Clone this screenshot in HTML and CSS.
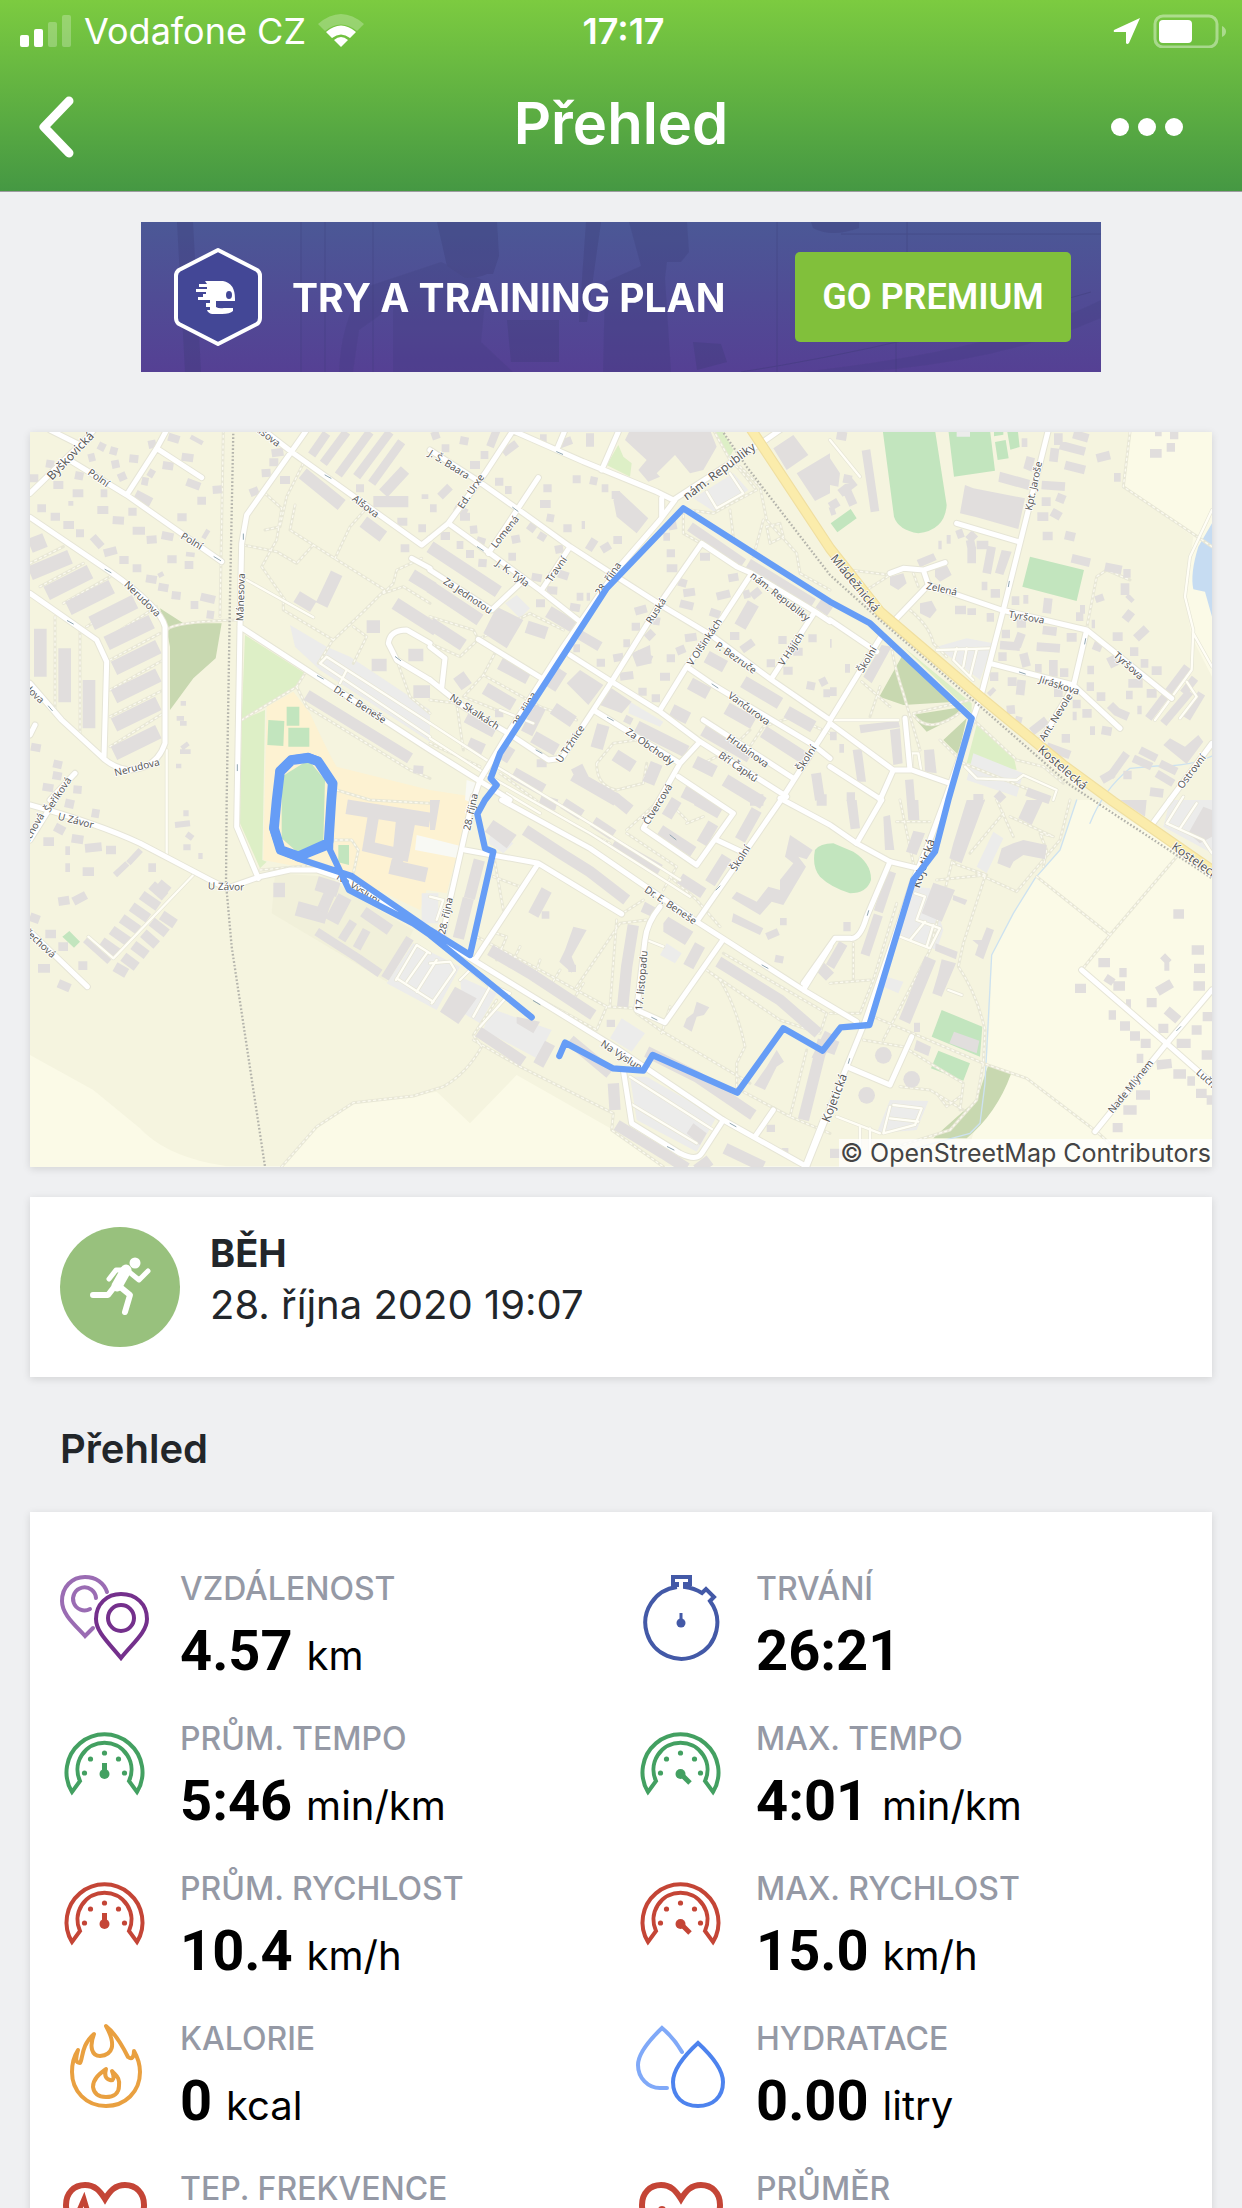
FILE: index.html
```html
<!DOCTYPE html>
<html lang="cs">
<head>
    <meta charset="UTF-8">
    <meta name="viewport" content="width=device-width, initial-scale=1.0">
    <link rel="stylesheet" href="styles.css">
    <title>Přehled</title>
</head>
<body>

<!-- shared icons -->
<svg class="sprite" aria-hidden="true">
    <symbol id="gauge" viewBox="0 0 90 90">
        <path d="M12 70A38 38 0 1 1 77 70L69 59A27 27 0 1 0 20 59Z" fill="none" stroke="currentColor" stroke-width="4"/>
        <g fill="currentColor">
            <circle cx="24.5" cy="51" r="2.6"/><circle cx="30.5" cy="37" r="2.6"/><circle cx="44.5" cy="31" r="2.6"/>
            <circle cx="58.5" cy="37" r="2.6"/><circle cx="64.5" cy="51" r="2.6"/><circle cx="44.5" cy="52" r="5"/>
        </g>
    </symbol>
    <symbol id="heart" viewBox="0 0 90 90">
        <path d="M45 82C20 64 6 50 6 33C6 21 14 13 25 13C35 13 40 19 45 27C50 19 55 13 65 13C76 13 84 21 84 33C84 50 70 64 45 82Z" fill="none" stroke="currentColor" stroke-width="6"/>
    </symbol>
</svg>

<header class="header">
    <div class="status">
        <div class="status-side">
            <svg class="signal" viewBox="0 0 52 34" fill="#fff">
                <rect x="0" y="21" width="9" height="12" rx="2"/>
                <rect x="14" y="15" width="9" height="18" rx="2"/>
                <rect x="28" y="8" width="9" height="25" rx="2" opacity=".25"/>
                <rect x="42" y="1" width="9" height="32" rx="2" opacity=".25"/>
            </svg>
            <span>Vodafone CZ</span>
            <svg class="wifi" viewBox="0 0 46 34" fill="#fff">
                <path d="M0 10Q23 -10 46 10L39 17Q23 4 7 17Z" opacity=".25"/>
                <path d="M8 18Q23 5 38 18L32 24Q23 17 14 24Z"/>
                <path d="M16 26Q23 20 30 26L23 33Z"/>
            </svg>
        </div>
        <span class="clock">17:17</span>
        <div class="status-side right">
            <svg class="location" viewBox="0 0 28 28" fill="#fff"><path d="M27 1L1 13Q0 15 2 15H13V26Q14 28 16 26Z"/></svg>
            <svg class="battery" viewBox="0 0 74 34" fill="#fff">
                <rect x="2" y="2" width="62" height="31" rx="8" fill="none" stroke="#fff" stroke-width="3" opacity=".4"/>
                <rect x="6" y="6" width="33" height="23" rx="4"/>
                <path d="M69 12Q73 14 73 17.500Q73 21 69 23Z" opacity=".4"/>
            </svg>
        </div>
    </div>
    <div class="nav">
        <button class="nav-button" aria-label="Zpět">
            <svg class="back" viewBox="0 0 36 64"><path d="M31 6L6 32L31 58" fill="none" stroke="#fff" stroke-width="9" stroke-linecap="round" stroke-linejoin="round"/></svg>
        </button>
        <h1>Přehled</h1>
        <button class="nav-button" aria-label="Více">
            <svg class="more" viewBox="0 0 72 18" fill="#fff"><circle cx="9" cy="9" r="9"/><circle cx="36" cy="9" r="9"/><circle cx="63" cy="9" r="9"/></svg>
        </button>
    </div>
</header>

<main class="page">
    <section class="banner">
        <svg class="banner-photo" viewBox="0 0 960 150" preserveAspectRatio="none" aria-hidden="true">
            <g fill="#3a3a72" opacity=".28">
                <path d="M36 0H52L60 150H44Z"/>
                <path d="M296 0H356L358 34L352 52H346Q338 56 324 56L306 44Z"/>
                <path d="M300 40L222 66Q200 100 198 150H212L218 108L252 84V150H372L340 120L346 60Z" opacity=".6"/>
                <path d="M488 0H546L548 30L540 40L526 40L524 56L530 150H462L464 60L500 44Z" opacity=".8"/>
                <path d="M670 0H718V6Q690 16 672 6Z"/>
                <path d="M366 98H418V140H370ZM445 0H460L446 100H438ZM552 120L580 122L586 140L556 148Z"/>
                <path d="M660 150Q860 128 960 78V96Q860 140 720 150Z" opacity=".6"/>
            </g>
            <g fill="none" stroke="#3a3a72" opacity=".35">
                <path d="M160 0V150M184 0V150M232 0V150M636 0V150M700 12H960M766 0V50M755 92V150"/>
                <path d="M600 150Q760 125 950 70"/>
            </g>
        </svg>
        <svg class="banner-logo" viewBox="0 0 88 100">
            <path d="M44 3L83 23Q86 25 86 29V71Q86 75 83 77L44 97L5 77Q2 75 2 71V29Q2 25 5 23Z" fill="#434796" stroke="#fff" stroke-width="4" stroke-linejoin="round"/>
            <path d="M31 34H49Q61 36 61 52V54H42V60Q45 62 50 61H59V64Q56 67 48 67H38Q34 66 33 63H36V60H32V56H36V53H24V50H29V47H32V45H22V42H33V40H25V37H33Z" fill="#fff"/>
            <ellipse cx="55" cy="48" rx="3" ry="4" fill="#434796"/>
        </svg>
        <span class="banner-text">TRY A TRAINING PLAN</span>
        <button class="premium">GO PREMIUM</button>
    </section>

    <section class="card map">
        <svg class="map-canvas" viewBox="0 6 3546 2204" role="img" aria-label="Mapa trasy">
            <defs>
                <g id="roads">
                    <path d="M0 190L165 30L200 -10M60 0L150 45M110 85L290 195L575 395M290 195L380 55L410 0M380 55L515 143M0 262L240 425Q390 530 405 590V940Q380 1015 300 1020Q250 1015 215 980L95 870L0 760M0 490L200 630L230 695L222 980M830 0L650 255L635 340L630 590L620 1190L685 1345M700 0L790 70L1175 345L1200 325M630 590L1200 960L1440 1110M1145 385L1200 415M1200 640L1130 600Q1080 600 1075 640L1100 690L1200 750M0 915L15 885M60 1110L135 1030"/>
                    <path transform="translate(0 1110)" d="M0 15Q200 70 330 130L540 240L590 265L690 230L780 210L860 210L950 240L1150 370L1330 480L1760 745L2080 960L2330 1100M0 120L100 -40M0 395L172 560"/>
                    <path transform="translate(1200 0)" d="M0 60L140 150L260 235L420 350L575 450L700 530L850 620L1025 750L1200 870M255 5L460 95L680 185L730 210M380 60L405 0M515 120L565 5M250 0L165 130L55 280L0 325M55 280L180 370L330 480L450 575M325 143L175 370M420 350L335 480M730 210L1000 35L1050 0M695 205V260M735 210L690 270L560 420L400 650L240 900L150 1050L130 1110M815 340L690 520L545 755L490 840L395 985L355 990L235 910M815 340L920 410L965 430L1155 545L1200 575M965 430L880 560L770 710L690 840M770 710L850 765L1150 945L1200 985M420 675L545 755L690 845L810 935L1070 1100M490 840L750 1000L810 935M1155 545L1025 745M820 870L1090 1045M1200 880L1060 1100M750 1000L640 1195L800 1305L910 1150L745 1040M145 628L335 745M0 650L45 685L35 775M0 750L100 830L235 910M0 420L185 540L270 460"/>
                    <path transform="translate(1200 1110)" d="M130 -10L60 300L40 400M105 150L325 190L575 342M325 190L135 480M215 0L480 145L800 365L1120 570L1280 665M690 320Q650 370 645 420L620 630L705 668L875 425M800 365L1060 -10M860 120L945 160M1050 -5L1200 75L1280 130L1380 185L1465 205M1120 570L1200 440M580 810L605 970L750 1060Q800 1085 815 1060L880 960M975 1010L1030 930M1125 1100L1180 960"/>
                    <path transform="translate(2400 0)" d="M655 0L520 540L455 790L345 1110M380 280L565 335M180 430L220 415L280 420L345 398M280 420L295 465L195 570M295 465L515 540L770 600L1025 805M770 600L730 770L625 945M480 700L730 765L870 895M150 625L0 870M0 880L190 1020L245 1020L360 1060M225 865L240 1020M190 1020L150 1110M0 570L140 665M0 1010L155 1110M1020 1110L1146 940"/>
                    <path transform="translate(2400 1110)" d="M345 0L300 120L250 240L190 420L105 665L50 800L-70 1100M80 130L155 0M180 185L110 350Q90 420 60 415L15 415L-80 550M50 800L180 855L245 710M755 510L1010 730L1146 850M795 995L1010 730L1146 570M965 75L1020 0"/>
                </g>
                <g id="lanes">
                    <path d="M650 450L850 562M870 700L890 680L1200 880M870 700L1200 920M950 720L930 760M410 960V1280M490 1335L250 1585L175 1520M1098 1650L1160 1545L1200 1570M1100 1645L1210 1715M1130 1655L1190 1570M1160 1685L1220 1590"/>
                    <path transform="translate(1200 0)" d="M830 185L860 235L940 190L900 130M210 840L310 880M0 880L200 1010L480 1180L750 1350M0 925L180 1040L480 1210L780 1400M230 1090L330 1150M90 1650L120 1620L180 1670L130 1760M185 1665L240 1690L150 1790M0 1600L60 1595L75 1620L5 1720M600 1940L850 2100M600 2020L800 2140M650 1530L700 1550M0 1400L40 1410L20 1470"/>
                    <path transform="translate(2400 0)" d="M0 870H205M320 660L480 655M380 655L370 690M410 655L400 710M440 660L420 740M370 690L430 750M1146 240L1080 380L1065 500L1090 600L1085 720L975 870M1090 610L1146 710M1070 755L1100 800L1050 865M405 1010L440 1045L560 1050L580 1035L680 1080L670 1110M0 30L90 140M245 975V1020M245 970L265 970L275 1030"/>
                    <path transform="translate(2400 1110)" d="M1010 70L1060 -10M1050 85L1100 10M1010 70L1120 120L1146 160M255 280L285 290L260 360L330 385L300 445L210 410M285 365L240 420M310 375L290 440M190 915L275 925L255 975L160 1000L180 920M180 955L265 965M20 950L150 1000M90 980V1050M120 985V1050M355 570L395 585"/>
                </g>
                <g id="paths">
                    <path d="M580 0L570 560M410 600Q430 575 620 570M705 190L755 235L740 330L695 410L765 510M820 100L770 200L750 290L705 300M795 225L780 300L850 345L1065 480L1000 545L905 635L865 700M640 345L740 365L800 400L850 345M1000 245L960 290L915 385M1175 385L1100 420L1090 460L1060 490M635 870L800 770L825 730M760 515V540L910 630M75 560V850M150 600V920M800 770L830 830L1140 1020L1200 1045M0 400L100 350M30 470L160 400M100 520L240 440M170 590L310 500M240 620L380 530M240 690L390 610M240 780L400 690M240 860L400 780M240 950L400 850M1100 690L1140 800L1200 850M920 1080L1020 1110L1200 1120M690 1320L860 1305M915 1230H965L985 1260L970 1330M1060 490L1120 470L1200 520M970 590L1010 620L970 700"/>
                    <path transform="translate(0 1110)" d="M755 1100L860 980L970 908L1150 888L1240 860Q1310 820 1355 740L1330 705L1400 600M1330 720L1470 800L1750 940L1745 990L1900 1100"/>
                    <path transform="translate(1200 0)" d="M850 0L900 90L930 120L980 180L850 250L780 240M760 240V310L830 350M900 240L910 320M1000 270L970 380M930 110L990 170L1010 270L1100 370L1110 430L1200 480M1010 290L1050 280L1060 320L1020 340ZM200 840L100 800L160 735L200 660M145 628L90 680L0 640M0 560L130 600L145 628L300 550L400 600M0 810L80 820L100 960M160 735L330 830L440 870M500 1000L550 940L620 930M500 1000Q500 1070 560 1080L640 1060L650 1000M210 1030L330 1120L440 1190L620 1290M590 1200L700 1100M820 1000L900 960L960 900M0 940L150 1010M1200 910L1090 860L1000 890L940 980"/>
                    <path transform="translate(1200 1110)" d="M190 160L220 330M190 230L270 260M140 410L330 510L530 620L610 625M570 345L640 300M560 360L540 620M440 560L570 370L650 360M200 400L230 410L200 480M270 440L240 500M330 480L310 540M390 510L360 560M460 550L430 600M720 230L800 300L870 380M830 510L870 540Q920 620 945 740L920 790V860M830 510L1050 660L1170 700L1190 640L880 460M620 640L690 690L960 850M530 620L500 690L280 570M695 700L720 620M930 870L1080 950L1200 1000M1080 950L1130 750M590 100L740 200L700 270M770 60L740 30M770 70L820 50M540 130L460 90"/>
                    <path transform="translate(2400 0)" d="M60 420L180 435L110 480M240 540Q300 590 310 640L350 680M250 430L265 470M900 6L880 170L1146 350M770 595L800 440L830 420L900 450M185 650Q190 700 220 790L270 960M95 755L180 830M250 850L420 810M250 855Q300 920 400 840M420 860L560 990L640 1010L700 1060M330 930L400 1000L600 1080M150 770L120 860M210 1110L250 1300M200 1175H300M720 1110L690 1230L560 1385L440 1330"/>
                    <path transform="translate(2400 1110)" d="M460 0L370 190L470 225L320 240M370 170L300 450L160 720M465 230L400 430L385 500Q440 580 465 690L460 790L440 900L360 990L200 1040M130 650L460 790L590 835L800 995L850 1040M620 230L840 405L755 510M840 405L1040 170M500 0L550 110M520 40L420 160M540 50L670 110L630 100L650 150L640 200M0 550L120 540M70 430V540M200 310L130 540L90 640H0M100 720L220 740L300 790L400 850L390 930M210 860L300 870L400 930M320 880L350 920L390 890"/>
                </g>
            </defs>

            <rect class="land" x="0" y="0" width="3546" height="2210"/>

            <!-- fields -->
            <g class="field">
                <path d="M0 1875L190 1980L330 2095Q400 2170 540 2200L600 2210H0Z"/>
                <path d="M755 2210L860 2090L970 2018L1150 1998L1220 1985L1320 2080L1460 1935L1750 2100L1900 2210Z"/>
                <path d="M3300 0L3280 170L3490 320L3465 500L3485 620L3546 740V0Z"/>
                <path d="M3140 1110L3090 1260L3015 1345L2950 1450L2885 1575L2880 1750L2865 1960L2830 2110L2800 2210H3546V1325L3200 1110Z"/>
            </g>
            <path class="yard" d="M735 1330L900 1340L960 1390L1150 1500L1070 1655L725 1450Z"/>
            <path class="school" d="M710 830L790 785L840 850Q900 980 920 1010L1200 1080L1330 1100L1290 1240L1250 1390L1190 1380L1170 1440L960 1340L700 1290Z"/>
            <g class="grass">
                <path d="M645 615L825 730L795 775L635 870ZM635 870L705 840L697 1290L710 1295L690 1315L630 1180Z"/>
                <path d="M1730 105L1765 45L1780 80L1805 100L1800 140ZM2050 6L2080 6L2110 60L2100 80Z"/>
                <path d="M2620 650L2825 820V850ZM2840 885L2950 975L2960 1020L2810 1000Z"/>
            </g>
            <g class="wood">
                <path d="M390 535L460 580L575 580L557 685L490 745L420 840V650L410 600Z"/>
                <path d="M2615 680L2548 800L2620 825L2780 815ZM2645 855L2800 830L2760 870L2690 905ZM2740 930L2810 865L2785 975Z"/>
                <path d="M2875 1905L2943 1932Q2900 2050 2810 2125L2710 2125Q2780 2060 2840 2010Z"/>
            </g>
            <g class="pitch">
                <path d="M770 830h38v57h-38ZM715 870l48 3-3 75-48-3ZM775 893h63v57h-63ZM925 1245h32v60l-32-8ZM118 1503L150 1535L132 1553L97 1520Z"/>
                <path d="M755 1040L835 990L885 1050L880 1235L808 1272L755 1225Z"/>
                <path d="M2558 0H2715L2750 225Q2745 300 2665 310Q2605 300 2592 260ZM2755 0H2880L2895 122L2772 140ZM2895 36l32-6 9 55-33 5ZM2932 6h32l5 45-28 8ZM2892 0h28v14l-28 5ZM3000 380L3162 420L3140 513L2977 470ZM2402 280L2462 237L2480 265L2422 307Z"/>
                <path d="M2355 1260Q2370 1240 2410 1240L2470 1265Q2525 1300 2523 1350Q2510 1390 2460 1390Q2400 1370 2370 1340Q2345 1310 2355 1260ZM2735 1740L2857 1790L2850 1880L2705 1820ZM2725 1862L2820 1900L2800 1952L2703 1915Z"/>
            </g>
            <path class="water" d="M3546 280L3505 350Q3480 430 3490 478L3525 485L3546 560Z"/>
            <path class="stream" d="M3546 978Q3480 1010 3380 1008L3300 1015Q3220 1080 3180 1180M3140 1110L3090 1260L3015 1345L2950 1450L2885 1575L2865 1960L2850 2080L2820 2110L2600 2170"/>
            <g class="parking">
                <path d="M780 585L890 650L960 680L1200 840V935L870 720L795 650ZM1070 1660L1150 1540L1290 1610L1220 1740ZM1175 1390h50v90h-50Z"/>
                <path d="M1425 520L1460 495L1500 535L1470 565ZM1800 815L1900 875L1890 890L1795 850ZM1990 205L2110 130L2155 180L2060 250ZM2780 0h40v20h-40Z"/>
                <path d="M1380 1735L1565 1800L1520 1885L1360 1800ZM1775 1765L1845 1810L1805 1865L1740 1825ZM1800 1940L1850 1940L2060 2060L2000 2165L1820 2070ZM1290 1640L1400 1690L1350 1780L1300 1750ZM1910 1540L1955 1570L1935 1600L1890 1575ZM1385 1200L1450 1240L1420 1270L1375 1240Z"/>
                <path d="M2720 650L2810 625L2890 640L2850 750ZM2830 970L2980 1030L2960 1100L2810 1050ZM2890 1205L2920 1225L2870 1330L2840 1310ZM2580 2010L2695 2013L2660 2100L2540 2110ZM3420 1110H3546V1270L3400 1190ZM2650 1370L2700 1375L2740 1500L2720 1560L2610 1520ZM2570 1640L2620 1655L2605 1690L2560 1670Z"/>
            </g>
            <path class="plaza" d="M1160 1215L1200 1225L1300 1250L1285 1285L1155 1260ZM1310 1050L1340 1060L1330 1120L1305 1110Z"/>

            <use href="#paths" class="path-case"/>
            <use href="#paths" class="path-line"/>

            <!-- buildings: wide strokes for the rows, short ones for the houses -->
            <g class="building">
                <path stroke-width="44" d="M0 348L45 330M0 430L120 380M50 490L180 425M115 535L245 470M185 580L315 515M230 640L365 575M252 715L385 650M252 800L385 735M252 885L385 820M252 970L385 905"/>
                <path stroke-width="38" d="M31 596V740M104 655V817M177 750V895M818 130L935 225M1000 275L1060 320M800 500L850 530M920 430L875 525M1145 435L1210 475M1095 520L1220 600M1010 590L1050 590M1025 705L1070 705M1135 675L1180 675M1150 785L1200 785"/>
                <path stroke-width="34" d="M830 795L1140 985M315 195L362 220M1060 190L1125 120M1030 215L1135 215"/>
                <path stroke-width="26" d="M845 75L890 10M880 100L950 6M925 135L1020 6M980 140L1080 6M1025 160L1115 35"/>
                <path stroke-width="24" d="M205 45L225 55M240 60L262 66M175 85L195 80M245 105L268 100M298 85L325 88M265 145L288 135M135 135L160 140M128 190L160 190M212 190L232 190M22 235L48 235M62 260L90 260M100 285L132 285M138 310L162 310M188 320L215 350M222 370L260 360M268 390L296 390M308 415L334 415M348 445L380 450M385 470L415 475M425 495L452 498M482 525L505 525M512 500L555 510M530 553L552 556M412 388L440 388M464 405L490 405M350 330L380 328M308 302L345 302M395 315L430 322M248 270L282 272M202 240L235 240M295 245L320 245M502 212L528 212M548 180L575 178M455 80L490 85M398 105L430 110M470 155L510 170M442 262L470 262M355 125L372 135M335 152L355 156M355 45L378 40M415 20L448 30M725 70L760 65M718 97L745 97M750 150L780 150M695 130L722 128M660 190L685 180M70 165L100 165M0 145L25 145M48 100L72 104M3 950L32 955M70 1000L96 1006M68 1035L95 1040M38 1070L70 1075M130 1078L155 1080M1150 1018L1180 1020M1112 355L1138 355M1102 275L1132 275M978 175L1002 175M1165 295L1188 295"/>
                <path stroke-width="14" d="M482 20L518 40M520 325L535 300M468 372L494 375M385 438L400 430M440 865H462M450 880H470M452 820H468M450 965H482M455 955L475 940M438 1008H454M115 220H130M1175 200H1195"/>
            </g>
            <g class="building" transform="translate(0 1110)">
                <path stroke-width="26" d="M105 8L132 14M185 38L208 42M40 125L72 125M75 80L103 95M125 115L160 120M165 145L215 140M228 150L258 150M158 215L192 215M85 305L118 300M130 305L168 285M0 350L28 360M46 402L78 402M85 440L114 440M24 505L60 505M145 497L172 497M85 550L120 565M355 203L378 203M106 152H120M106 203H120"/>
                <path stroke-width="30" d="M335 285L385 320M305 320L355 355M275 355L325 390M245 390L295 425M215 425L265 460M255 500L290 520M280 470L320 500M310 435L350 465M340 400L380 435M365 365L410 400M395 345L435 372M365 255L405 290M385 250L415 275"/>
                <path stroke-width="18" d="M165 420L238 485M255 225L292 190M295 190L332 150M435 75L480 70M460 40H476M470 102L488 115M460 142H482M505 168H518"/>
                <path stroke-width="44" d="M800 325L890 350M860 250L925 270M945 290L905 365M950 20L1200 60M730 270L765 270M1080 200L1190 225"/>
                <path stroke-width="34" d="M1000 335L1080 390M905 265L875 335M1030 50L1015 140L1120 165L1140 60M1115 60L1100 210"/>
                <path stroke-width="26" d="M970 365L935 420M1010 390L980 445M860 395L985 475M985 475L1050 520M1140 415L1065 535"/>
            </g>
            <g class="building" transform="translate(1200 0)">
                <path class="solid" d="M585 30L600 0H840L860 50L820 120L780 130L735 75L680 130L690 140L655 155L625 120L650 90ZM1030 55L1090 15L1135 75L1070 120ZM1100 130L1200 70V190L1155 213ZM550 210L570 185L655 265L620 310L560 260ZM200 530L280 570L230 655L160 610ZM410 760L450 720L520 765L475 825ZM525 790L545 775L605 815L575 850L510 825ZM605 670L660 645L665 700L620 710Z"/>
                <path stroke-width="38" d="M0 350L205 485M0 470L150 570M0 580L100 645M210 700L295 745M165 775L250 825M85 735L110 770M290 590L350 610M110 860L195 905M115 940L160 960M355 545L430 590M330 830L290 910M395 720L360 775M240 950L215 990M370 835L430 875M310 920L380 960M430 1035L560 1110M520 885L500 955M555 975L610 1010M620 890L770 965M680 1000L655 1060M725 840L775 865M780 760L835 790M830 680L885 710M890 835L970 880M820 900L960 980M1000 905L1140 995M940 755L1050 820M1070 845L1150 890M795 995L855 1025M885 1050L1000 1120M760 1085L830 1120M970 520L930 590M250 1030L340 1080M440 1010L460 1050"/>
                <path stroke-width="30" d="M780 290L940 400M955 400L1150 520M1165 520L1200 545M450 615L510 650M1158 1030L1170 1110"/>
                <path stroke-width="24" d="M5 20L28 12M35 55H58M90 30L115 35M180 50L200 0M220 70L260 40M120 105H150M152 75H175M195 155H220M225 180H245M30 200L60 170M75 230L110 250M90 260H120M120 300L142 298M140 330L165 338M32 318H60M80 345H100M108 372H132M145 398L170 400M245 330L270 325M295 285L315 300M330 330L342 310M350 262L372 266M330 222H362M340 175H365M428 148H452M480 150L502 155M515 175H535M545 195H570M375 360L400 355M400 295H425M455 285H465M475 360L495 328M515 360L540 345M550 330H576M235 380H258M350 480L382 482M385 430L415 440M305 440L335 445M420 530L450 535M318 520H345M385 45L425 30M480 50V10M700 320H720M715 290L740 285M710 370H735M710 415H742M810 380H840M745 455L770 462M760 490L795 485M750 520L790 530M860 500L900 490M840 545L870 555M895 445L925 440M940 495L960 490M965 500L990 480M615 545L650 535M660 570L690 575M605 590H630M650 625L670 605M580 640H600M550 685L580 680M500 698H525M570 740L610 735M620 670L665 690M690 740H720M710 685H735M740 665L765 655M765 625L800 620M900 618H928M935 660L970 635M1045 630H1070M1090 665H1118M1010 700H1035M1060 722H1088M1135 625H1160M1130 765L1155 770M1170 760L1190 750M1180 790H1200M625 785H650M665 805H690M195 850H220M320 1000H350M590 880L600 860M470 500H480M440 500H460M430 655H450M330 25H350M0 235H20"/>
            </g>
            <g class="building" transform="translate(1200 1110)">
                <path class="solid" d="M165 95L190 60L260 105L230 145ZM30 635L75 560L140 595L85 672ZM0 0H30L15 90H0ZM700 370L715 350L790 395L765 435L700 395ZM645 305L680 325L665 350L632 335ZM1080 105L1148 150L1130 178L1105 170L1128 200L1060 315L1025 305L990 345L905 295L920 275L980 305L1015 260L1050 270L1050 240L1090 190L1065 170ZM910 340L1000 385L990 405L905 365ZM260 650L330 665L310 700L260 670ZM430 380L470 390L425 470L435 495L425 518L388 485L405 450ZM800 605L838 622L822 645L800 650L785 695L760 680L770 655L790 640ZM1040 750L1062 785L1040 800L1005 870L972 855L1010 800ZM770 1000L790 970L830 1000L810 1035Z"/>
                <path stroke-width="34" d="M285 90L400 165L480 215L590 300M148 180L118 295M115 295L85 415M350 270L310 345M610 375L590 500L578 620M180 450L300 520L490 645M810 435L775 500M865 485L1050 600L1165 700M420 720L540 820M650 755L800 830L970 945M550 850L555 930M560 975L700 1060L770 1105M885 1045L1000 1100M145 695L280 785M360 730L325 795M550 130L690 210M490 65L550 105M400 10L455 45M330 0L380 15M690 90L790 155M740 0L710 50M850 70L815 130M750 235L820 280M890 170L840 250M800 0L870 40M980 30L930 120M550 -10L600 30M840 1080L800 1110M960 0H1000M1160 0H1190M1160 780L1200 700M1180 720L1120 960M1170 500L1200 530"/>
                <path stroke-width="22" d="M335 345H358M530 670H555M1050 365H1070M1010 410L1045 395M1035 475L1060 480M1010 985H1035M1055 1055H1075M415 505H438M0 400H20"/>
            </g>
            <g class="building" transform="translate(2400 0)">
                <path class="solid" d="M405 165L430 175L585 205L565 297L440 262L390 250ZM0 85L30 130L25 170L0 165ZM1000 945L1020 925L1065 950L1105 915L1120 935L1070 1002ZM510 125L600 150L595 180L505 155ZM590 78L615 85L605 125L580 115ZM515 360L545 365L520 435L495 428ZM260 390L310 370L320 390L270 412ZM315 415L350 405L365 435L330 455L315 440ZM180 440L220 430L230 460L205 480L180 465ZM270 520L305 512L320 540L300 565L270 550ZM88 885L205 872L210 892L92 910ZM180 900L210 895L218 1000L190 1005ZM68 960L95 957L108 1055L82 1055ZM282 960L312 958L320 1030L285 1025ZM225 1050L250 1048L255 1110H230ZM100 740L155 645L185 650L125 760Z"/>
                <path stroke-width="26" d="M108 60L135 245M20 15L50 20M40 145L65 150M30 190L75 155M50 180L70 225M0 230L25 215M0 245L15 240M685 10V45M675 55L670 95M690 45L765 65M730 12L775 25M705 105L765 120M635 165L705 170M635 215L662 215M622 260L655 260M638 318L668 318M705 315L735 322M725 385L780 398M825 410L875 420M880 430H902M800 85L840 75M852 142H872M680 200L705 210M665 245L692 260M410 345L435 340M415 330L435 310M440 345L475 345M425 350V400M485 350L470 430M455 468H472M482 490H510M545 512H568M580 508H595M655 505L650 550M470 562H492M375 540L408 540M425 535V555M738 560H760M750 538H765M515 612H540M560 650L575 610M510 645L570 650M560 580H588M638 600L680 605M620 650L690 655M710 622H740M505 680H530M580 670L590 710M615 715H635M690 728H715M670 690V740M480 740H505M533 755L560 755M575 750L570 795M530 840L555 838M555 870L575 875M480 780L490 790M672 788H698M728 822H752M728 858H740M757 850H785M770 770H792M772 720H792M790 645L815 655M848 620H878M918 625L950 595M885 570L905 545M885 460L885 495M895 510L905 500M805 495L812 515M785 582H795M900 665H925M895 760H938M932 700H955M965 722H995M950 790H980M888 795H908M800 800H826M840 825L860 845L895 860M780 902H795M815 900L845 905M922 840H935M695 925H720M605 905L650 870M840 680L855 710M650 950L720 975M960 70H995M1010 52H1035M975 6H995M1020 15H1045M575 38H592M325 345H335M350 328H362M380 315L400 308M0 785H20M45 715H60M0 918H20M28 955H42M0 640H5M50 1100H75M500 1090L520 1110M590 1085L660 1110M430 1105H460M880 1035H905M815 1050L850 1030M960 1085L1000 1090"/>
                <path stroke-width="24" d="M1072 710L955 865M1080 785L1000 880M1115 790L1070 865M1095 745L1060 790M930 960L980 985M910 985L965 1010M990 1000L1040 1025M980 1030L1030 1060M890 970L840 1040"/>
            </g>
            <g class="building" transform="translate(2400 1110)">
                <path class="solid" d="M410 0H465L395 190L358 175L370 130ZM590 0H640L605 75L565 55ZM515 145L550 130L580 120L650 135L645 178L580 165L550 185L540 205L502 190ZM310 248L375 270L335 365L275 340ZM470 382L492 390L460 478L435 465L445 435L427 420L455 420ZM285 468L318 482L240 672L207 657ZM335 478L378 490L335 590L307 580L325 520ZM372 695L448 722L440 760L358 730ZM317 430L383 455L378 478L315 452ZM1075 100L1120 20L1146 30V110L1110 130ZM370 285L412 300L405 315L368 300ZM160 50L180 45L193 150L165 150ZM50 0H80L90 85L62 88ZM230 0H265L268 60H235ZM250 92L285 100L260 165L228 155ZM260 720L303 740L295 768L252 750ZM870 0H950L945 50Z"/>
                <path stroke-width="28" d="M185 215L145 335M145 345L105 465M40 430L0 500M40 380H62M1030 342H1062M1085 450H1122M1092 505H1125M1090 558H1125M735 565H768M805 488H840M868 518H890M850 558H885M982 575L1025 550M950 608H980M1010 630L1045 660M985 685H1015M1085 690H1115M1040 730H1082M1118 650H1146M1115 765H1146M1030 822H1068M1072 843H1095M1098 880H1130M980 795L1025 790M918 885H960M880 930H920M848 983H878M900 708H930M870 678H900M932 730H962M836 645H858M920 775H940M888 612H903M1003 498H1018M1000 485L1015 470M832 550L845 530M1130 900H1146M252 682H270M0 760L15 720M0 1060H50"/>
                <circle cx="160" cy="766" r="25"/><circle cx="245" cy="838" r="25"/><circle cx="110" cy="886" r="25"/>
            </g>

            <use href="#lanes" class="lane-case"/>
            <use href="#lanes" class="lane-line"/>
            <use href="#roads" class="road-case"/>
            <use href="#roads" class="road-line"/>
            <path class="main-case" d="M2165 0L2400 355L2550 545L2850 800L3100 1005L3250 1115L3546 1320"/>
            <path class="main-line" d="M2165 0L2400 355L2550 545L2850 800L3100 1005L3250 1115L3546 1320"/>
            <path class="rail" d="M610 0L600 500L590 1110L588 1360L605 1550L705 2210M2075 0L2150 110L2400 435L2550 570L2840 820L3120 1065L3546 1345"/>
            <path class="arrows" d="M885 135l18 10M225 418l18 10M552 380l20 12M112 572l18 10M55 828l12 14M640 328v-16M862 737l18 10M1096 680l16 12M622 1022v-18M1448 232l16 12M1342 350l18 12M1580 65l18 8M2046 762l18 12M1732 862l18 10M1518 960l18 10M1920 1215l18 14M2058 1380l12-12M2196 1605l18 10M1510 1712l20 12M1865 1762l16 8M2100 2080l18 10M1912 2150l20 10M2935 470l3-16M2968 726l18 6M3164 642l3-16M3440 1802l12-12M2512 1456l4-14M2455 1900l4-14"/>

            <g class="labels">
                <g>
                    <text transform="translate(130 86) rotate(-46)" class="big">Byškovická</text>
                    <text transform="translate(200 152) rotate(35)">Polní</text>
                    <text transform="translate(480 342) rotate(31)">Polní</text>
                    <text transform="translate(330 514) rotate(44)">Nerudova</text>
                    <text transform="translate(323 1022) rotate(-14)">Nerudova</text>
                    <text transform="translate(642 502) rotate(-88)">Mánesova</text>
                    <text transform="translate(1001 237) rotate(37)">Alšova</text>
                    <text transform="translate(705 24) rotate(37)">Alšova</text>
                    <text transform="translate(984 832) rotate(33)">Dr. E. Beneše</text>
                    <text transform="translate(135 1182) rotate(14)">U Závor</text>
                    <text transform="translate(588 1380) rotate(2)">U Závor</text>
                    <text transform="translate(92 1100) rotate(-56)">Šeříková</text>
                    <text transform="translate(-20 775) rotate(43)">Nerudova</text>
                    <text transform="translate(10 1215) rotate(-60)">Ořechová</text>
                    <text transform="translate(16 1540) rotate(43)">Ořechová</text>
                    <text transform="translate(980 1385) rotate(32)">Na Výsluní</text>
                </g>
                <g transform="translate(1200 0)">
                    <text transform="translate(52 112) rotate(32)">J. Š. Baara</text>
                    <text transform="translate(131 190) rotate(-56)">Ed. Urxe</text>
                    <text transform="translate(233 312) rotate(-51)">Lomená</text>
                    <text transform="translate(388 424) rotate(-55)">Travní</text>
                    <text transform="translate(242 438) rotate(36)">J. K. Týla</text>
                    <text transform="translate(108 506) rotate(34)">Za Jednotou</text>
                    <text transform="translate(543 452) rotate(-55)">28. října</text>
                    <text transform="translate(687 548) rotate(-57)">Ruská</text>
                    <text transform="translate(832 642) rotate(-56)">V Olšinkách</text>
                    <text transform="translate(912 692) rotate(35)">P. Bezruče</text>
                    <text transform="translate(875 134) rotate(-37)" class="big">nám. Republiky</text>
                    <text transform="translate(1044 508) rotate(38)">nám. Republiky</text>
                    <text transform="translate(1092 663) rotate(-56)">V Hájích</text>
                    <text transform="translate(951 844) rotate(36)">Vančurova</text>
                    <text transform="translate(947 971) rotate(36)">Hrubínova</text>
                    <text transform="translate(919 1019) rotate(35)">Bří Čapků</text>
                    <text transform="translate(1138 990) rotate(-58)">Školní</text>
                    <text transform="translate(654 958) rotate(35)">Za Obchody</text>
                    <text transform="translate(429 948) rotate(-56)">U Tržnice</text>
                    <text transform="translate(128 854) rotate(33)">Na Skalkách</text>
                    <text transform="translate(293 843) rotate(-60)">28. října</text>
                </g>
                <g transform="translate(2400 0)">
                    <text transform="translate(621 170) rotate(-78)">Kpt. Jaroše</text>
                    <text transform="translate(333 487) rotate(12)">Zelená</text>
                    <text transform="translate(588 572) rotate(10)">Tyršova</text>
                    <text transform="translate(889 715) rotate(42)">Tyršova</text>
                    <text transform="translate(685 776) rotate(18)">Jiráskova</text>
                    <text transform="translate(686 867) rotate(-58)">Ant. Nevole</text>
                    <text transform="translate(66 467) rotate(51)" class="big">Mládežnická</text>
                    <text transform="translate(690 1022) rotate(41)" class="big">Kostelecká</text>
                    <text transform="translate(1093 1031) rotate(-53)">Ostrovní</text>
                    <text transform="translate(120 694) rotate(-60)">Školní</text>
                </g>
                <g transform="translate(1200 1110)">
                    <text transform="translate(716 324) rotate(34)">Dr. E. Beneše</text>
                    <text transform="translate(940 180) rotate(-58)">Školní</text>
                    <text transform="translate(645 543) rotate(-85)">17. listopadu</text>
                    <text transform="translate(572 777) rotate(33)">Na Výsluní</text>
                    <text transform="translate(57 350) rotate(-78)">28. října</text>
                    <text transform="translate(132 38) rotate(-78)">28. října</text>
                    <text transform="translate(692 18) rotate(-58)">Čtvercová</text>
                </g>
                <g transform="translate(2400 1110)">
                    <text transform="translate(1096 197) rotate(35)" class="big">Kostelecká</text>
                    <text transform="translate(910 866) rotate(-51)">Nade Mlýnem</text>
                    <text transform="translate(1124 845) rotate(43)">Luční</text>
                    <text transform="translate(25 898) rotate(-69)" class="big">Kojetická</text>
                    <text transform="translate(292 194) rotate(-72)" class="big">Kojetická</text>
                </g>
            </g>

            <path class="route" d="M1505 1762L1200 1515L1150 1480L957 1380L900 1260L903 1110L907 1055L865 990L835 978L782 985L746 1020L742 1110L727 1195L750 1262L805 1285L893 1250M800 1284L935 1328L965 1338L1200 1500L1320 1575L1390 1265L1365 1255L1342 1152L1365 1110L1400 1065L1382 1045L1410 970L1730 475L1960 235L2400 515L2520 580L2825 865L2755 1110L2715 1265L2650 1350L2518 1785L2432 1792L2378 1862L2260 1795L2122 1988L1868 1875L1840 1922L1748 1915L1605 1838L1588 1878"/>
            <path class="route lap" d="M896 1235L904 1110L908 1060L864 994L835 984L785 991L750 1025L740 1110L732 1195L752 1260L805 1279L885 1243"/>
        </svg>
        <span class="attribution">© OpenStreetMap Contributors</span>
    </section>

    <section class="card activity">
        <svg class="sport" viewBox="0 0 120 120">
            <circle cx="60" cy="60" r="60" fill="#98c17d"/>
            <g fill="none" stroke="#fff" stroke-linecap="round" stroke-linejoin="round">
                <path d="M66 43L57 59" stroke-width="11"/>
                <path d="M68 43H56L49 52M68 44L79 53L88 44" stroke-width="5"/>
                <path d="M55 59L48 68H33M59 59L70 68L65 85" stroke-width="6"/>
            </g>
            <circle cx="75" cy="36" r="5.500" fill="#fff"/>
        </svg>
        <div>
            <h2 class="activity-name">BĚH</h2>
            <p class="activity-date">28. října 2020 19:07</p>
        </div>
    </section>

    <h2 class="section-title">Přehled</h2>

    <section class="card stats">
        <div class="stat">
            <svg class="icon" viewBox="0 0 90 90" fill="none" stroke-width="4">
                <g stroke="#9a6cb3" stroke-linecap="round">
                    <path d="M47 20C44 11 36 5 25 5C12 5 2 15 2 29C2 42 14 52 25 64L33 56"/>
                    <path d="M36 26A11.500 11.500 0 1 0 30 37"/>
                </g>
                <g stroke="#74308c">
                    <path d="M61 86C49 71 36 60 36 47C36 32 47 22 61 22C76 22 87 32 87 47C87 60 73 71 61 86Z"/>
                    <circle cx="61" cy="46" r="13"/>
                </g>
            </svg>
            <div>
                <div class="label">VZDÁLENOST</div>
                <div class="value">4.57 <span class="unit">km</span></div>
            </div>
        </div>
        <div class="stat">
            <svg class="icon" viewBox="0 0 90 90" fill="none" stroke="#4359a7" stroke-width="4">
                <path d="M41 15V12H37V5H54V12H49V15Q58 16 66 21L70 17L78 25L74 29A36 36 0 1 1 41 15"/>
                <path d="M45 41V50" stroke-width="3"/>
                <circle cx="45" cy="51" r="4.500" fill="#4359a7" stroke="none"/>
            </svg>
            <div>
                <div class="label">TRVÁNÍ</div>
                <div class="value">26:21</div>
            </div>
        </div>
        <div class="stat">
            <svg class="icon green" viewBox="0 0 90 90"><use href="#gauge"/><path d="M44.500 41V50" stroke="currentColor" stroke-width="5"/></svg>
            <div>
                <div class="label">PRŮM. TEMPO</div>
                <div class="value">5:46 <span class="unit">min/km</span></div>
            </div>
        </div>
        <div class="stat">
            <svg class="icon green" viewBox="0 0 90 90"><use href="#gauge"/><path d="M45 52L54 61" stroke="currentColor" stroke-width="5"/></svg>
            <div>
                <div class="label">MAX. TEMPO</div>
                <div class="value">4:01 <span class="unit">min/km</span></div>
            </div>
        </div>
        <div class="stat">
            <svg class="icon red" viewBox="0 0 90 90"><use href="#gauge"/><path d="M44.500 41V50" stroke="currentColor" stroke-width="5"/></svg>
            <div>
                <div class="label">PRŮM. RYCHLOST</div>
                <div class="value">10.4 <span class="unit">km/h</span></div>
            </div>
        </div>
        <div class="stat">
            <svg class="icon red" viewBox="0 0 90 90"><use href="#gauge"/><path d="M45 52L54 61" stroke="currentColor" stroke-width="5"/></svg>
            <div>
                <div class="label">MAX. RYCHLOST</div>
                <div class="value">15.0 <span class="unit">km/h</span></div>
            </div>
        </div>
        <div class="stat">
            <svg class="icon" viewBox="0 0 90 90" fill="none" stroke="#e9a040" stroke-width="4" stroke-linejoin="round">
                <path d="M46 4C55 11 62 23 68 35C72 38 74 35 74 29C78 36 80 43 80 50C80 70 65 84 46 84C26 84 12 69 12 50C12 42 14 34 18 28C15 38 16 41 20 41C23 37 21 23 34 12C29 25 32 34 40 34C52 33 57 24 46 4Z"/>
                <path d="M46 47C41 51 33 56 33 65C34 72 39 75 46 75C54 75 59 71 59 64C60 55 56 54 52 49C55 57 53 59 50 58C46 57 44 54 46 47Z"/>
            </svg>
            <div>
                <div class="label">KALORIE</div>
                <div class="value">0 <span class="unit">kcal</span></div>
            </div>
        </div>
        <div class="stat">
            <svg class="icon" viewBox="0 0 90 90" fill="none" stroke-width="4">
                <path d="M46 30Q38 16 26 6Q2 29 2 43C2 56 12 66 24 66H31" stroke="#80a9f8" stroke-linecap="round"/>
                <path d="M62 21Q37 44 37 60C37 75 47 84 62 84C77 84 87 75 87 60Q87 44 62 21Z" stroke="#4d83ee"/>
            </svg>
            <div>
                <div class="label">HYDRATACE</div>
                <div class="value">0.00 <span class="unit">litry</span></div>
            </div>
        </div>
        <div class="stat">
            <svg class="icon red" viewBox="0 0 90 90"><use href="#heart"/><path d="M14 50L24 27L34 60" fill="none" stroke="currentColor" stroke-width="5"/></svg>
            <div>
                <div class="label">TEP. FREKVENCE</div>
            </div>
        </div>
        <div class="stat">
            <svg class="icon red" viewBox="0 0 90 90"><use href="#heart"/><circle cx="26" cy="38" r="4" fill="currentColor"/></svg>
            <div>
                <div class="label">PRŮMĚR</div>
            </div>
        </div>
    </section>
</main>

</body>
</html>
```
FILE: styles.css
```css
html {
    height: 100%;
    overflow: hidden;
}

body {
    font-family: Inter, "Liberation Sans", sans-serif;
    background-color: #eff0f2;
    color: #22262a;
    margin: 0;
    height: 100%;
    overflow: hidden;
}

h1, h2, p {
    margin: 0;
}

button {
    border: none;
    padding: 0;
    background: none;
    color: #fff;
    cursor: pointer;
}

svg {
    display: block;
    flex: none;
}

.sprite {
    position: absolute;
    width: 0;
    height: 0;
}

/* Header */
.header {
    background: linear-gradient(#7ccb40, #459843);
    border-bottom: 1px solid #9c9ca0;
    color: #fff;
}

.status {
    display: flex;
    align-items: center;
    height: 62px;
    padding: 0 15px 0 20px;
    font-size: 36px;
}

.status-side {
    display: flex;
    flex: 1;
    align-items: center;
    gap: 12px;
}

.right {
    justify-content: flex-end;
}

.clock {
    font-weight: 600;
}

.signal {
    width: 52px;
    height: 34px;
}

.wifi {
    width: 46px;
    height: 34px;
}

.location {
    width: 28px;
    height: 28px;
}

.battery {
    width: 74px;
    height: 34px;
}

.nav {
    display: flex;
    align-items: center;
    justify-content: space-between;
    height: 129px;
}

.nav-button {
    display: flex;
    align-items: center;
    justify-content: center;
    box-sizing: border-box;
    width: 190px;
    height: 120px;
}

.nav-button:first-child {
    justify-content: flex-start;
    padding-left: 38px;
}

.back {
    width: 36px;
    height: 64px;
}

.more {
    width: 72px;
    height: 18px;
}

.nav h1 {
    padding-bottom: 8px;
    font-size: 58px;
    font-weight: 600;
    line-height: 112px;
}

/* Banner */
.page {
    padding: 30px;
}

.banner {
    position: relative;
    display: flex;
    align-items: center;
    box-sizing: border-box;
    max-width: 960px;
    height: 150px;
    margin: 0 auto 60px;
    padding: 0 30px 0 33px;
    background: linear-gradient(#4b5896, #554094);
    color: #fff;
}

.banner-photo {
    position: absolute;
    inset: 0;
    width: 100%;
    height: 100%;
}

.banner-logo {
    position: relative;
    width: 88px;
    height: 100px;
    margin-right: 30px;
}

.banner-text {
    position: relative;
    flex: 1;
    font-size: 39px;
    font-weight: 700;
}

.premium {
    position: relative;
    width: 276px;
    height: 90px;
    border-radius: 5px;
    background-color: #81c03b;
    font: 600 36px Roboto, sans-serif;
}

/* Cards */
.card {
    background-color: #fff;
    box-shadow: 0 2px 8px rgba(0, 0, 0, 0.12);
}

.activity {
    display: flex;
    gap: 30px;
    margin-top: 30px;
    padding: 30px;
}

.sport {
    width: 120px;
    height: 120px;
}

.activity-name {
    font-size: 38px;
    font-weight: 700;
    line-height: 52px;
}

.activity-date {
    font-size: 40px;
    line-height: 52px;
}

.section-title {
    padding: 8px 30px 0;
    font-size: 40px;
    font-weight: 600;
    line-height: 127px;
}

/* Map */
.map {
    position: relative;
    overflow: hidden;
}

.map-canvas {
    width: 100%;
    height: auto;
}

.attribution {
    position: absolute;
    right: 0;
    bottom: 0;
    padding: 0 1px;
    background-color: rgba(255, 255, 255, 0.75);
    color: #444;
    font-size: 25px;
    line-height: 28px;
}

.land { fill: #f5f4df; }
.field { fill: #fbfae7; }
.yard { fill: #f1f0da; }
.school { fill: #fdf2d2; }
.grass { fill: #ddefc6; }
.wood { fill: #c8d8b0; }
.pitch { fill: #c2e5be; }
.water { fill: #c6dcf2; }
.parking { fill: #ececeb; }
.plaza { fill: #f8f9f4; }

.building {
    fill: none;
    stroke: #e1dedd;
}

.building .solid,
.building circle {
    fill: #e1dedd;
    stroke: none;
}

.stream, .path-case, .path-line, .lane-case, .lane-line,
.road-case, .road-line, .main-case, .main-line, .rail, .arrows, .route {
    fill: none;
    stroke-linejoin: round;
    stroke-linecap: round;
}

.stream { stroke: #cde2f0; stroke-width: 4px; }
.path-case { stroke: #e8e7d6; stroke-width: 9px; }
.path-line { stroke: #fbfaf0; stroke-width: 4px; stroke-dasharray: 6 10; }
.lane-case { stroke: #e6e5d6; stroke-width: 11px; }
.lane-line { stroke: #fffef6; stroke-width: 7px; }
.road-case { stroke: #e6e5d6; stroke-width: 21px; }
.road-line { stroke: #fff; stroke-width: 15px; }
.main-case { stroke: #f0dfa0; stroke-width: 32px; }
.main-line { stroke: #fbecab; stroke-width: 25px; }
.rail { stroke: #b4b4ac; stroke-width: 7px; stroke-linecap: butt; stroke-dasharray: 5 6; }
.arrows { stroke: #8fa5b0; stroke-width: 3px; }
.route { stroke: #669df6; stroke-width: 19px; }
.lap { stroke-width: 29px; }

.labels {
    font-family: "Noto Sans", sans-serif;
    font-size: 30px;
    fill: #5a5a58;
    stroke: #fff;
    stroke-width: 5px;
    stroke-linejoin: round;
    paint-order: stroke;
    text-anchor: middle;
}

.big {
    font-size: 36px;
}

/* Stats */
.stats {
    display: grid;
    grid-template-columns: 1fr 1fr;
    column-gap: 30px;
    padding: 60px 30px;
}

.stat {
    display: flex;
    gap: 30px;
    height: 150px;
}

.icon {
    width: 90px;
    height: 90px;
}

.green { color: #43a061; }
.red { color: #c44536; }

.label {
    color: #9599a5;
    font-size: 32px;
    font-weight: 500;
    line-height: 34px;
}

.value {
    color: #000;
    font: 700 56px/90px Roboto, sans-serif;
}

.unit {
    font: 400 40px Inter, "Liberation Sans", sans-serif;
}
```
